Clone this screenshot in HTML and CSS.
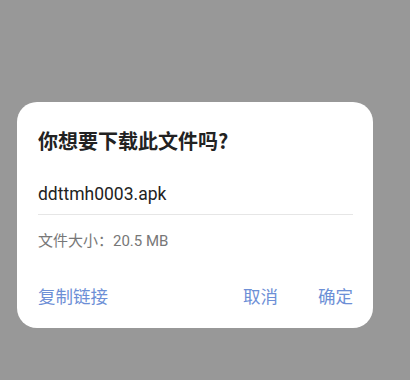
FILE: index.html
```html
<!DOCTYPE html>
<html lang="zh-CN">
<head>
<meta charset="utf-8">
<title>下载文件</title>
<link rel="stylesheet" href="styles.css">
</head>
<body>
<div class="dialog">
  <div class="title">你想要下载此文件吗?</div>
  <div class="filename">ddttmh0003.apk</div>
  <div class="size">文件大小：20.5 MB</div>
  <div class="actions">
    <span class="btn">复制链接</span>
    <span class="spacer"></span>
    <span class="btn">取消</span>
    <span class="btn">确定</span>
  </div>
</div>
</body>
</html>
```

FILE: styles.css
```css
html, body {
  margin: 0;
  padding: 0;
  background: #989898;
  width: 410px;
  height: 380px;
  overflow: hidden;
  font-family: Roboto, "Noto Sans CJK SC", sans-serif;
}
.dialog {
  box-sizing: border-box;
  margin: 102px 0 0 17px;
  width: 356px;
  height: 226px;
  background: #fff;
  border-radius: 20px;
  padding: 23px 20px 0 21px;
}
.title {
  font-family: "Noto Sans CJK SC", sans-serif;
  font-size: 20px;
  font-weight: 700;
  color: #222;
  line-height: 32px;
}
.filename {
  margin-top: 24px;
  font-size: 17.5px;
  color: #222;
  line-height: 26px;
  padding-bottom: 7px;
  border-bottom: 1px solid #e6e6e6;
}
.size {
  margin-top: 14px;
  font-size: 15px;
  color: #777;
  line-height: 24px;
}
.actions {
  display: flex;
  align-items: center;
  margin-top: 31px;
  gap: 40px;
}
.spacer { flex: 1; margin-right: -40px; }
.btn {
  font-size: 17.5px;
  color: #6d8fd6;
  line-height: 26px;
}
```
